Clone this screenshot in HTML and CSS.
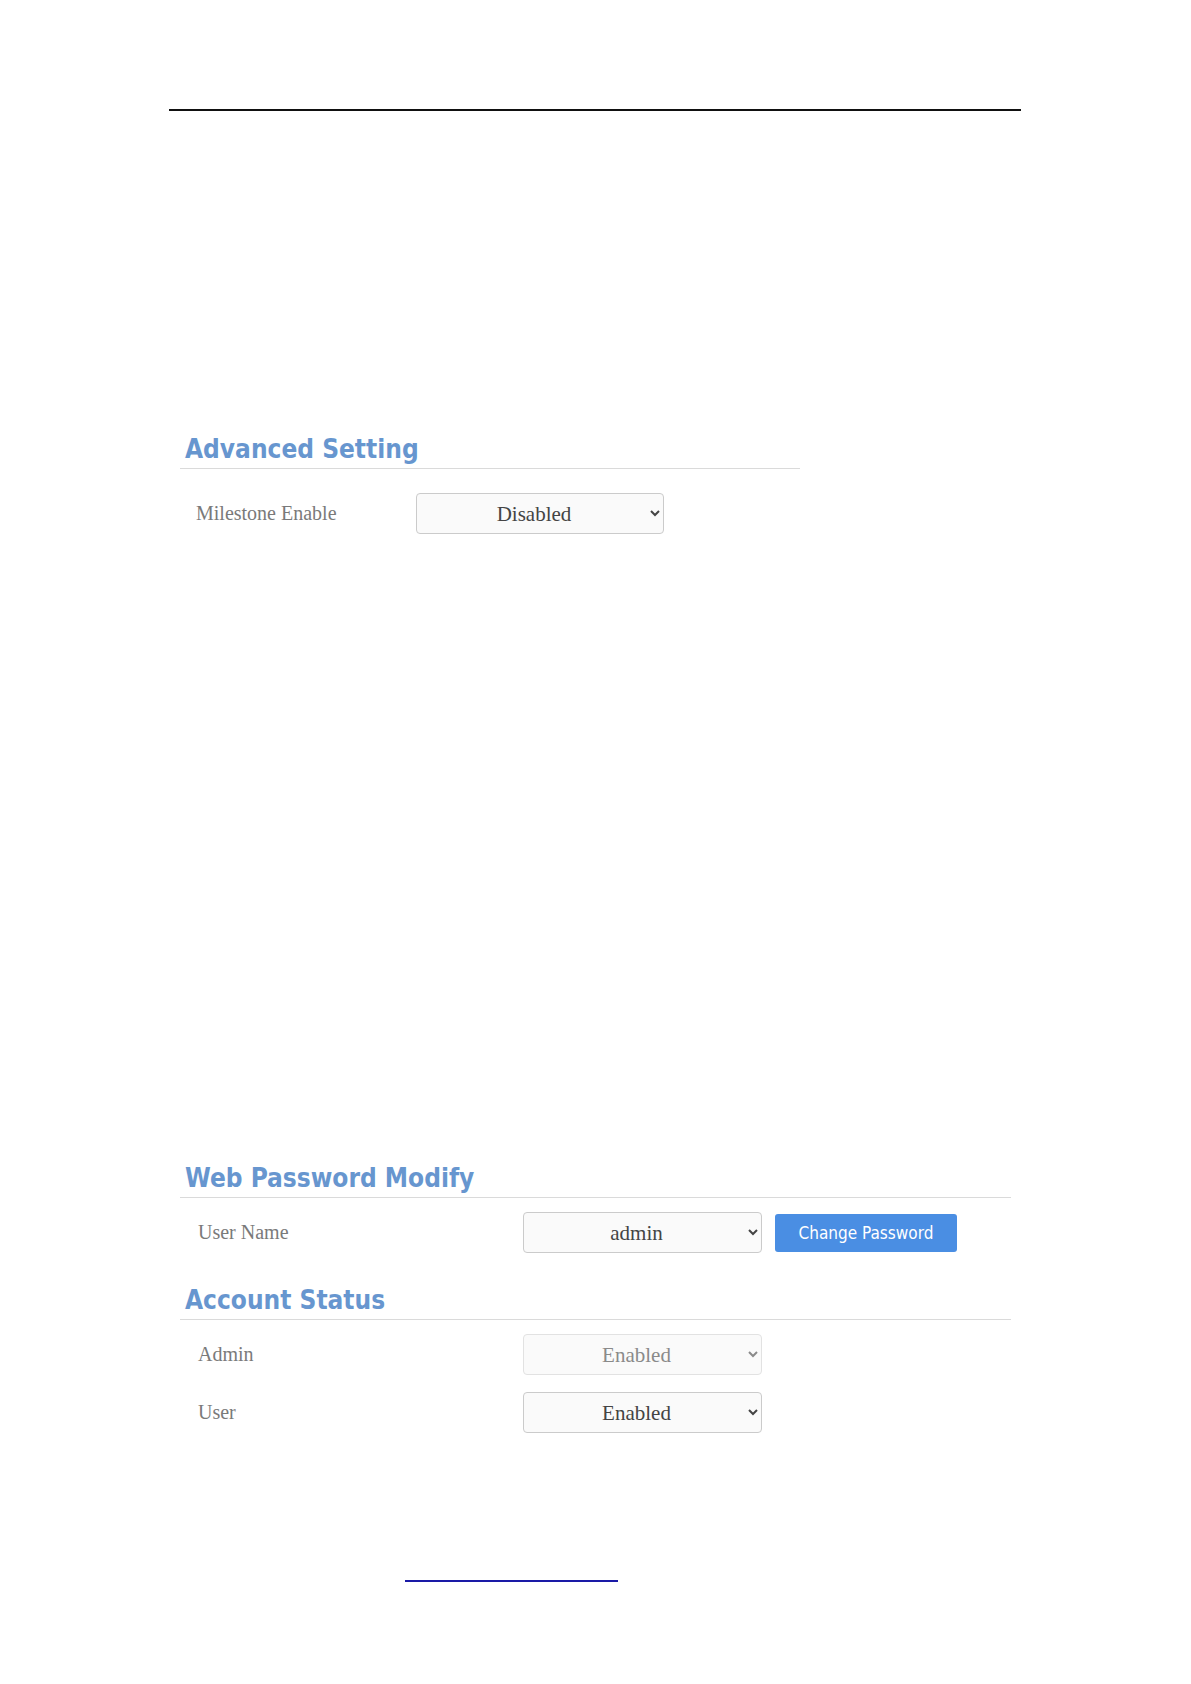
FILE: index.html
```html
<!DOCTYPE html>
<html>
<head>
  <meta charset="utf-8">
  <title>Device Settings</title>
  <link rel="stylesheet" href="styles.css">
</head>
<body>
  <div class="doc">
    <div class="top-rule"></div>

    <!-- Advanced setting block -->
    <div class="panel panel-advanced">
      <h2 class="panel-title">Advanced Setting</h2>
      <div class="row row-narrow">
        <label for="milestone">Milestone Enable</label>
        <select id="milestone" class="field field-wide">
          <option>Disabled</option>
          <option>Enabled</option>
        </select>
      </div>
    </div>

    <!-- Password block -->
    <div class="panel panel-password">
      <h2 class="panel-title">Web Password Modify</h2>
      <div class="row">
        <label for="username">User Name</label>
        <select id="username" class="field">
          <option>admin</option>
          <option>user</option>
        </select>
        <button type="button" class="btn-primary">Change Password</button>
      </div>
    </div>

    <!-- Account status block -->
    <div class="panel panel-status">
      <h2 class="panel-title">Account Status</h2>
      <div class="row">
        <label for="admin-status">Admin</label>
        <select id="admin-status" class="field" disabled>
          <option>Enabled</option>
        </select>
      </div>
      <div class="row row-next">
        <label for="user-status">User</label>
        <select id="user-status" class="field">
          <option>Enabled</option>
          <option>Disabled</option>
        </select>
      </div>
    </div>

    <div class="link-line"></div>
  </div>
</body>
</html>
```

FILE: styles.css
```css
/* Page frame */
body {
  margin: 0;
  background-color: #fff;
  font-family: "Liberation Serif", serif;
}
.doc {
  width: 852px;
  margin-left: 169px;
  padding-top: 109px;
  padding-bottom: 100px;
}
.top-rule {
  border-top: 2px solid #111;
}

/* Panels */
.panel {
  margin-left: 11px;
  width: 620px;
}
.panel-advanced {
  margin-top: 323px;
}
.panel-password {
  margin-top: 629px;
  width: 831px;
}
.panel-status {
  margin-top: 32px;
  width: 831px;
}
.panel-title {
  margin: 0;
  padding: 0 0 4px 5px;
  border-bottom: 1px solid #dadada;
  font-family: "DejaVu Sans Condensed", "DejaVu Sans", sans-serif;
  font-stretch: condensed;
  font-weight: bold;
  font-size: 26px;
  line-height: 30px;
  color: #6796cf;
}

/* Rows */
.row {
  display: grid;
  grid-template-columns: 325px 239px auto;
  align-items: center;
  padding-left: 18px;
  margin-top: 14px;
}
.row-narrow {
  grid-template-columns: 220px 248px;
  padding-left: 16px;
  margin-top: 24px;
}
.row-next {
  margin-top: 17px;
}
.row label {
  font-size: 20px;
  color: #7a7a7a;
}

/* Form controls */
.field {
  width: 239px;
  height: 41px;
  border: 1px solid #cbcbcb;
  border-radius: 4px;
  background-color: #fafafa;
  font-family: "Liberation Serif", serif;
  font-size: 21px;
  color: #444;
  text-align: center;
  text-align-last: center;
}
.field-wide {
  width: 248px;
}
.field:disabled {
  border-color: #e2e2e2;
  color: #8a8a8a;
  opacity: 1;
}
.btn-primary {
  width: 182px;
  height: 38px;
  margin-left: 13px;
  border: none;
  border-radius: 3px;
  background-color: #4a8ee3;
  color: #fff;
  font-family: "DejaVu Sans Condensed", "DejaVu Sans", sans-serif;
  font-stretch: condensed;
  font-size: 17px;
  cursor: pointer;
}

/* Stray link underline near the bottom */
.link-line {
  margin: 147px 0 0 236px;
  width: 213px;
  border-top: 2px solid #1a1aa6;
}
```
